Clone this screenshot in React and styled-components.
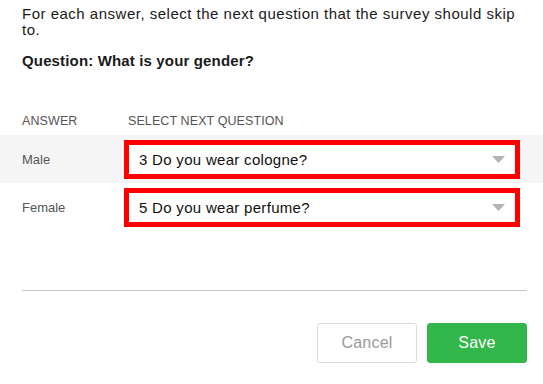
import React from "react";
import styled, { createGlobalStyle } from "styled-components";

const Global = createGlobalStyle`
  html, body { margin: 0; padding: 0; background: #fff; }
  body { font-family: "Liberation Sans", Arial, Helvetica, sans-serif; color: #1a1a1a; }
  * { box-sizing: border-box; }
`;

const Page = styled.div`
  width: 543px;
  height: 384px;
  display: flex;
  flex-direction: column;
  background: #fff;
`;

const Intro = styled.p`
  margin: 6px 0 0;
  padding: 0 22px;
  font-size: 15px;
  line-height: 16px;
  letter-spacing: 0.5px;
`;

const QuestionTitle = styled.h2`
  margin: 14px 0 0;
  padding: 0 22px;
  font-size: 15px;
  line-height: 17px;
  font-weight: bold;
  letter-spacing: 0.15px;
`;

const Table = styled.div`
  margin-top: 37px;
  display: flex;
  flex-direction: column;
`;

const HeaderRow = styled.div`
  display: grid;
  grid-template-columns: 106px 1fr;
  padding: 0 23px 0 22px;
  height: 29px;
  align-items: center;
`;

const HeaderCell = styled.div`
  font-size: 12.5px;
  color: #555;
  text-transform: uppercase;
  letter-spacing: 0.1px;
`;

const Row = styled.div`
  display: grid;
  grid-template-columns: 102px 1fr;
  padding: 0 23px 0 22px;
  height: 48px;
  align-items: center;
  background: ${(p) => (p.$shaded ? "#f5f5f5" : "transparent")};
`;

const AnswerLabel = styled.div`
  font-size: 13px;
  color: #555;
`;

const Select = styled.div`
  height: 39px;
  border: 5px solid #ff0000;
  background: #fff;
  display: flex;
  align-items: center;
  justify-content: space-between;
  padding: 0 10px 0 10px;
  font-size: 15px;
  letter-spacing: 0.3px;
  color: #111;
`;

const Arrow = styled.svg`
  width: 13px;
  height: 7px;
  flex: none;
`;

const Divider = styled.hr`
  margin: 59px 16px 0 22px;
  border: 0;
  border-top: 1px solid #c8c8c8;
  height: 0;
`;

const Footer = styled.div`
  display: flex;
  justify-content: flex-end;
  gap: 10px;
  padding: 0 16px 0 22px;
  margin-top: 32px;
`;

const Button = styled.button`
  width: 100px;
  height: 40px;
  padding: 0;
  border-radius: 3px;
  font-family: inherit;
  font-size: 16px;
  letter-spacing: 0.2px;
  cursor: pointer;
  border: 1px solid ${(p) => (p.$primary ? "#34b74a" : "#dcdcdc")};
  background: ${(p) => (p.$primary ? "#34b74a" : "#fff")};
  color: ${(p) => (p.$primary ? "#fff" : "#999")};
`;

const rows = [
  { answer: "Male", next: "3 Do you wear cologne?" },
  { answer: "Female", next: "5 Do you wear perfume?" },
];

export default function App() {
  return (
    <Page>
      <Global />
      <Intro>
        For each answer, select the next question that the survey should skip
        to.
      </Intro>
      <QuestionTitle>Question: What is your gender?</QuestionTitle>
      <Table>
        <HeaderRow>
          <HeaderCell>Answer</HeaderCell>
          <HeaderCell>Select next question</HeaderCell>
        </HeaderRow>
        {rows.map((r, i) => (
          <Row key={r.answer} $shaded={i === 0}>
            <AnswerLabel>{r.answer}</AnswerLabel>
            <Select>
              <span>{r.next}</span>
              <Arrow viewBox="0 0 13 7">
                <path d="M0 0 H13 L6.5 7 Z" fill="#b3b3b3" />
              </Arrow>
            </Select>
          </Row>
        ))}
      </Table>
      <Divider />
      <Footer>
        <Button>Cancel</Button>
        <Button $primary>Save</Button>
      </Footer>
    </Page>
  );
}
